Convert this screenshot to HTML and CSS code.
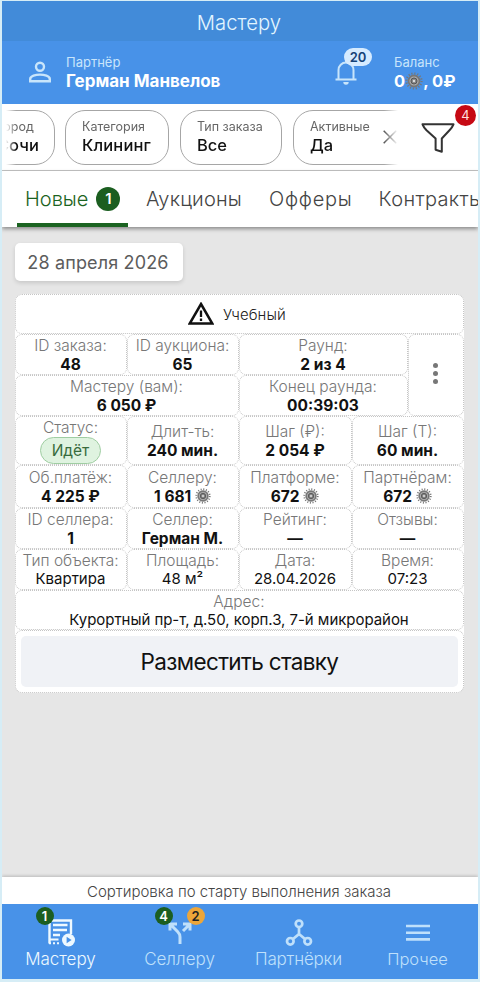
FILE: index.html
```html
<!DOCTYPE html>
<html lang="ru">
<head>
<meta charset="utf-8">
<title>Мастеру</title>
<link rel="stylesheet" href="styles.css">
</head>
<body>
<svg class="defs" aria-hidden="true">
  <symbol id="gear" viewBox="0 0 18 18">
    <circle cx="9" cy="9" r="7.6" fill="none" stroke="#777" stroke-width="2" stroke-dasharray="1.2 1.79"/>
    <circle cx="9" cy="9" r="5.500" fill="#aaa" stroke="#777" stroke-width="1.800"/>
    <circle cx="9" cy="9" r="3" fill="#858585" stroke="#555" stroke-width="1"/>
    <circle cx="9" cy="9" r="1.2" fill="#ddd"/>
  </symbol>
</svg>
<div class="app">
  <div class="titlebar">Мастеру</div>
  <header class="profile">
    <svg class="person" viewBox="0 0 24 24" fill="none" stroke="currentColor" stroke-width="2.400"><circle cx="12" cy="6.700" r="4"/><path d="M2.200 21.300v-2.200c0-3 5.600-4.500 9.800-4.500s9.800 1.500 9.800 4.500v2.200z"/></svg>
    <div class="who"><div class="cap">Партнёр</div><div class="name">Герман Манвелов</div></div>
    <div class="bell">
      <svg viewBox="0 0 24 26" fill="none" stroke="currentColor" stroke-width="2"><path d="M4.500 20.500V11a7.500 7.500 0 0 1 15 0v9.500M1.500 20.500h21M12 3.500V1"/><path d="M9.300 23h5.400a2.700 2.700 0 0 1-5.400 0z" fill="currentColor" stroke="none"/></svg>
      <span class="bell-count">20</span>
    </div>
    <div class="balance"><div class="cap">Баланс</div><div class="sum">0<svg class="gear"><use href="#gear"/></svg>, 0₽</div></div>
  </header>
  <div class="filters">
    <div class="chips">
      <div class="chip chip-city"><small>Город</small><b>Сочи</b></div>
      <div class="chip chip-cat"><small>Категория</small><b>Клининг</b></div>
      <div class="chip chip-type"><small>Тип заказа</small><b>Все</b></div>
      <div class="chip chip-active"><div><small>Активные</small><b>Да</b></div><svg class="cross" viewBox="0 0 14 14"><path d="M.7.700l12.600 12.600M13.300.700L.7 13.300" stroke="#555" stroke-width="1.500"/></svg></div>
    </div>
    <div class="funnel">
      <svg viewBox="0 0 34 32" fill="none" stroke="#333" stroke-width="2" stroke-linejoin="round"><path d="M1.500 2.300h31q-1 2.700-4 5.900L20.800 16.500v13.200l-6.200-2v-11.200L5.500 8.200Q2.500 5 1.500 2.300z"/></svg>
      <span class="funnel-count">4</span>
    </div>
  </div>
  <nav class="tabs">
    <div class="tab tab-on"><span class="t-new">Новые</span><i>1</i></div>
    <div class="tab t-auc">Аукционы</div>
    <div class="tab t-off">Офферы</div>
    <div class="tab t-con">Контракты</div>
  </nav>
  <main class="content">
    <div class="date">28 апреля 2026</div>
    <section class="card">
      <div class="cell study"><svg viewBox="0 0 26 23"><path d="M13 2L24.300 21.500H1.700z" fill="none" stroke="#111" stroke-width="2.500"/><path d="M13 8.500v6.500M13 16.500v2.500" stroke="#111" stroke-width="2.300"/></svg><span>Учебный</span></div>
      <div class="round">
        <div class="cell"><span>ID заказа:</span><b>48</b></div>
        <div class="cell"><span>ID аукциона:</span><b>65</b></div>
        <div class="cell"><span>Раунд:</span><b>2 из 4</b></div>
        <div class="cell more"><i></i><i></i><i></i></div>
        <div class="cell pay"><span>Мастеру (вам):</span><b>6 050 ₽</b></div>
        <div class="cell"><span>Конец раунда:</span><b>00:39:03</b></div>
      </div>
      <div class="facts">
        <div class="cell state"><span>Статус:</span><em>Идёт</em></div>
        <div class="cell"><span>Длит-ть:</span><b>240 мин.</b></div>
        <div class="cell"><span>Шаг (₽):</span><b>2 054 ₽</b></div>
        <div class="cell"><span>Шаг (Т):</span><b>60 мин.</b></div>
        <div class="cell paid"><span>Об.платёж:</span><b>4 225 ₽</b></div>
        <div class="cell"><span>Селлеру:</span><b>1 681 <svg class="gear"><use href="#gear"/></svg></b></div>
        <div class="cell"><span>Платформе:</span><b>672 <svg class="gear"><use href="#gear"/></svg></b></div>
        <div class="cell"><span>Партнёрам:</span><b>672 <svg class="gear"><use href="#gear"/></svg></b></div>
        <div class="cell"><span>ID селлера:</span><b>1</b></div>
        <div class="cell"><span>Селлер:</span><b class="seller">Герман М.</b></div>
        <div class="cell"><span>Рейтинг:</span><b>—</b></div>
        <div class="cell"><span>Отзывы:</span><b>—</b></div>
        <div class="cell plain"><span>Тип объекта:</span><b>Квартира</b></div>
        <div class="cell plain"><span>Площадь:</span><b>48 м²</b></div>
        <div class="cell plain"><span>Дата:</span><b>28.04.2026</b></div>
        <div class="cell plain"><span>Время:</span><b>07:23</b></div>
        <div class="cell plain address"><span>Адрес:</span><b>Курортный пр-т, д.50, корп.3, 7-й микрорайон</b></div>
      </div>
      <div class="cell bid"><button>Разместить ставку</button></div>
    </section>
  </main>
  <div class="sort">Сортировка по старту выполнения заказа</div>
  <nav class="bottom">
    <div class="nav nav-on"><div class="ico"><svg viewBox="0 0 28 28"><path d="M2.500 1.500h21.500v13.500M2.500 1.500v23M6 6h14.500M6 11h14M6 16h7" fill="none" stroke="currentColor" stroke-width="2.400"/><path d="M2.500 20.500h9M2 24.300h2M6 24.300h2M10 24.300h2" stroke="currentColor" stroke-width="2"/><circle cx="21.500" cy="21" r="6.500" fill="currentColor"/><path d="M19.600 17.800v6.400l5-3.200z" fill="#4892e8"/></svg><i class="badge green left">1</i></div><span>Мастеру</span></div>
    <div class="nav"><div class="ico"><svg viewBox="0 0 28 28" fill="none" stroke="currentColor" stroke-width="3"><path d="M14 25v-7q0-3-2.500-5.500L5 6M4 11.500V5h7M17 5h7v6.500M24 5l-7 7"/></svg><i class="badge green left">4</i><i class="badge orange">2</i></div><span>Селлеру</span></div>
    <div class="nav"><div class="ico"><svg viewBox="0 0 28 28" fill="none" stroke="currentColor" stroke-width="2.700"><circle cx="14" cy="4.800" r="3.300"/><circle cx="5.300" cy="22.300" r="3.300"/><circle cx="22.700" cy="22.300" r="3.300"/><path d="M14 8.500v6.500L8 20M14 15l6 5"/></svg></div><span class="l-partner">Партнёрки</span></div>
    <div class="nav"><div class="ico"><svg viewBox="0 0 28 28" stroke="currentColor" stroke-width="2.600"><path d="M2 7h24M2 13.700h24M2 20.400h24"/></svg></div><span class="l-more">Прочее</span></div>
  </nav>
</div>
</body>
</html>
```
FILE: styles.css
```css
* { box-sizing: border-box; }
body { margin: 0; background: #d6edf6; font-family: Inter, "Liberation Sans", sans-serif; color: #111; }
.defs { position: absolute; width: 0; height: 0; }
i, em { font-style: normal; }
.app { width: 476px; height: 978px; margin: 1px 2px 3px; display: flex; flex-direction: column; overflow: hidden; background: #e6e6e6; }
.titlebar { height: 40px; flex: none; background: #428bd9; color: #e2f5ff; font-size: 20.3px; font-weight: 300; line-height: 44px; text-align: center; padding-right: 2px; }
.profile { height: 63px; flex: none; background: #4892e8; display: flex; color: #c8e5fb; }
.person { width: 24px; height: 24px; margin: 19px 14px 0 26px; }
.who { width: 254px; padding-top: 14px; }
.cap { font-size: 13px; line-height: 15px; }
.name, .sum { font-size: 16.5px; line-height: 22px; font-weight: 700; color: #fff; white-space: nowrap; }
.name { font-size: 17px; }
.bell { position: relative; width: 74px; padding: 18px 0 0 14px; }
.bell svg { width: 24px; height: 26px; display: block; }
.bell-count { position: absolute; left: 24px; top: 7px; width: 28px; height: 18px; border-radius: 9px; background: #d6ebff; color: #154277; font-size: 13px; line-height: 18px; font-weight: 600; text-align: center; }
.balance { padding-top: 14px; }
.gear { width: 18px; height: 18px; vertical-align: -3px; }
.filters { height: 67px; flex: none; background: #fff; display: flex; border-bottom: 1px solid #c4c4c4; }
.chips { width: 396px; margin-left: 4px; padding-top: 6px; display: flex; gap: 11px; overflow: hidden; -webkit-mask-image: linear-gradient(90deg, transparent 0, #000 10px, #000 378px, transparent 392px); mask-image: linear-gradient(90deg, transparent 0, #000 10px, #000 378px, transparent 392px); }
.chip { height: 55px; flex: none; border: 1px solid #a6a6a6; border-radius: 20px; padding: 7px 0 0 16px; }
.chip small, .chip b { display: block; white-space: nowrap; }
.chip small { font-size: 12.5px; line-height: 17px; color: #666; }
.chip b { font-size: 16.5px; line-height: 21px; font-weight: 500; }
.chip-city { width: 84px; margin-left: -35px; padding-left: 25px; }
.chip-cat { width: 104px; margin-left: -1px; }
.chip-cat b { letter-spacing: .15px; }
.chip-type { width: 102px; }
.chip-active { width: 140px; display: flex; gap: 13px; }
.cross { width: 14px; height: 14px; margin-top: 12px; }
.funnel { position: relative; padding: 18px 0 0 19px; }
.funnel svg { width: 34px; height: 32px; display: block; }
.funnel-count { position: absolute; left: 53px; top: 1px; width: 21px; height: 21px; border-radius: 50%; background: #c60914; color: #ffdede; font-size: 13px; line-height: 21px; text-align: center; }
.tabs { height: 56px; flex: none; background: #fff; display: flex; padding-left: 15px; gap: 27px; box-shadow: 0 2px 4px #0006; font-size: 20px; line-height: 56px; font-weight: 300; color: #444; z-index: 1; }
.tab { flex: none; white-space: nowrap; }
.t-auc { letter-spacing: .2px; }
.t-off { letter-spacing: .75px; margin-right: -1px; }
.t-con { letter-spacing: .35px; }
.tab-on { width: 111px; margin-right: -9px; padding-left: 8px; display: flex; gap: 8px; border-bottom: 4px solid #1b6321; color: #1b6321; }
.tab-on i { width: 24px; height: 24px; margin-top: 16px; border-radius: 50%; background: #1b5e20; color: #fff; font-size: 15px; line-height: 24px; font-weight: 600; text-align: center; }
.content { flex: 1; padding: 16px 0 0 13px; }
.date { width: 168px; height: 38px; border-radius: 5px; background: #fff; box-shadow: 0 2px 4px #0002; color: #5c5c5c; font-size: 18px; letter-spacing: .15px; line-height: 39px; text-align: center; white-space: nowrap; padding-right: 2px; }
.card { width: 449px; margin-top: 13px; background: #fff; border-radius: 8px; }
.cell { border: 1px dotted #c5c5c5; border-radius: 7px; text-align: center; display: flex; flex-direction: column; justify-content: center; align-items: center; font-size: 15.5px; line-height: 19px; white-space: nowrap; min-width: 0; padding-right: 1px; }
.cell span { color: #777; font-weight: 300; }
.cell b { font-weight: 700; }
.cell .gear { width: 16px; height: 16px; vertical-align: -2px; }
.study { height: 40px; flex-direction: row; gap: 9px; padding-right: 5px; }
.study svg { width: 26px; height: 23px; margin-top: -2px; }
.study span { color: #222; font-size: 15px; letter-spacing: .1px; }
.round { display: grid; grid-template-columns: 112px 112px 169px 56px; grid-template-rows: 41px 41px; }
.pay { grid-column: span 2; }
.more { grid-column: 4; grid-row: 1 / 3; gap: 3px; padding: 0 1px 4px 0; }
.more i { width: 5px; height: 5px; border-radius: 50%; background: #777; }
.facts { display: grid; grid-template-columns: 112px 112px 113px 112px; grid-template-rows: 49px 43px 41px 41px 40px; }
.state em { width: 61px; height: 27px; border: 1px solid #9fcda2; border-radius: 14px; background: #dff3e0; color: #386b3c; line-height: 26px; }
.paid { padding-top: 1px; }
.plain b { font-weight: 400; font-size: 15px; margin-top: -1px; }
.address { grid-column: 1 / -1; }
.address b { letter-spacing: -.04px; }
.bid { height: 63px; padding: 5px; align-items: stretch; }
.bid button { height: 51px; border: 0; border-radius: 5px; background: #f0f2f6; color: #111; font: 400 22.5px/51px Inter, "Liberation Sans", sans-serif; letter-spacing: -.65px; padding: 0; }
.sort { height: 27px; flex: none; background: #fff; box-shadow: 0 -1px 3px #0003; color: #444; font-size: 15px; line-height: 29px; font-weight: 300; text-align: center; white-space: nowrap; padding-right: 2px; }
.bottom { height: 75px; flex: none; background: #4892e8; display: grid; grid-template-columns: repeat(4, 119px); color: #bfe0fb; }
.nav { display: flex; flex-direction: column; align-items: center; padding: 15px 2px 0 0; font-size: 17px; line-height: 24px; font-weight: 300; }
.l-more { font-size: 16.5px; }
.l-partner { letter-spacing: -.2px; }
.nav-on { color: #eef9ff; }
.ico { position: relative; width: 28px; height: 28px; }
.ico svg { width: 28px; height: 28px; display: block; }
.badge { position: absolute; top: -12px; width: 18px; height: 18px; border-radius: 50%; font-size: 13px; line-height: 18px; font-weight: 600; text-align: center; }
.left { left: -11px; }
.green { background: #1b5e20; color: #fff; }
.orange { left: 21px; background: #eda63a; color: #222; }
```
